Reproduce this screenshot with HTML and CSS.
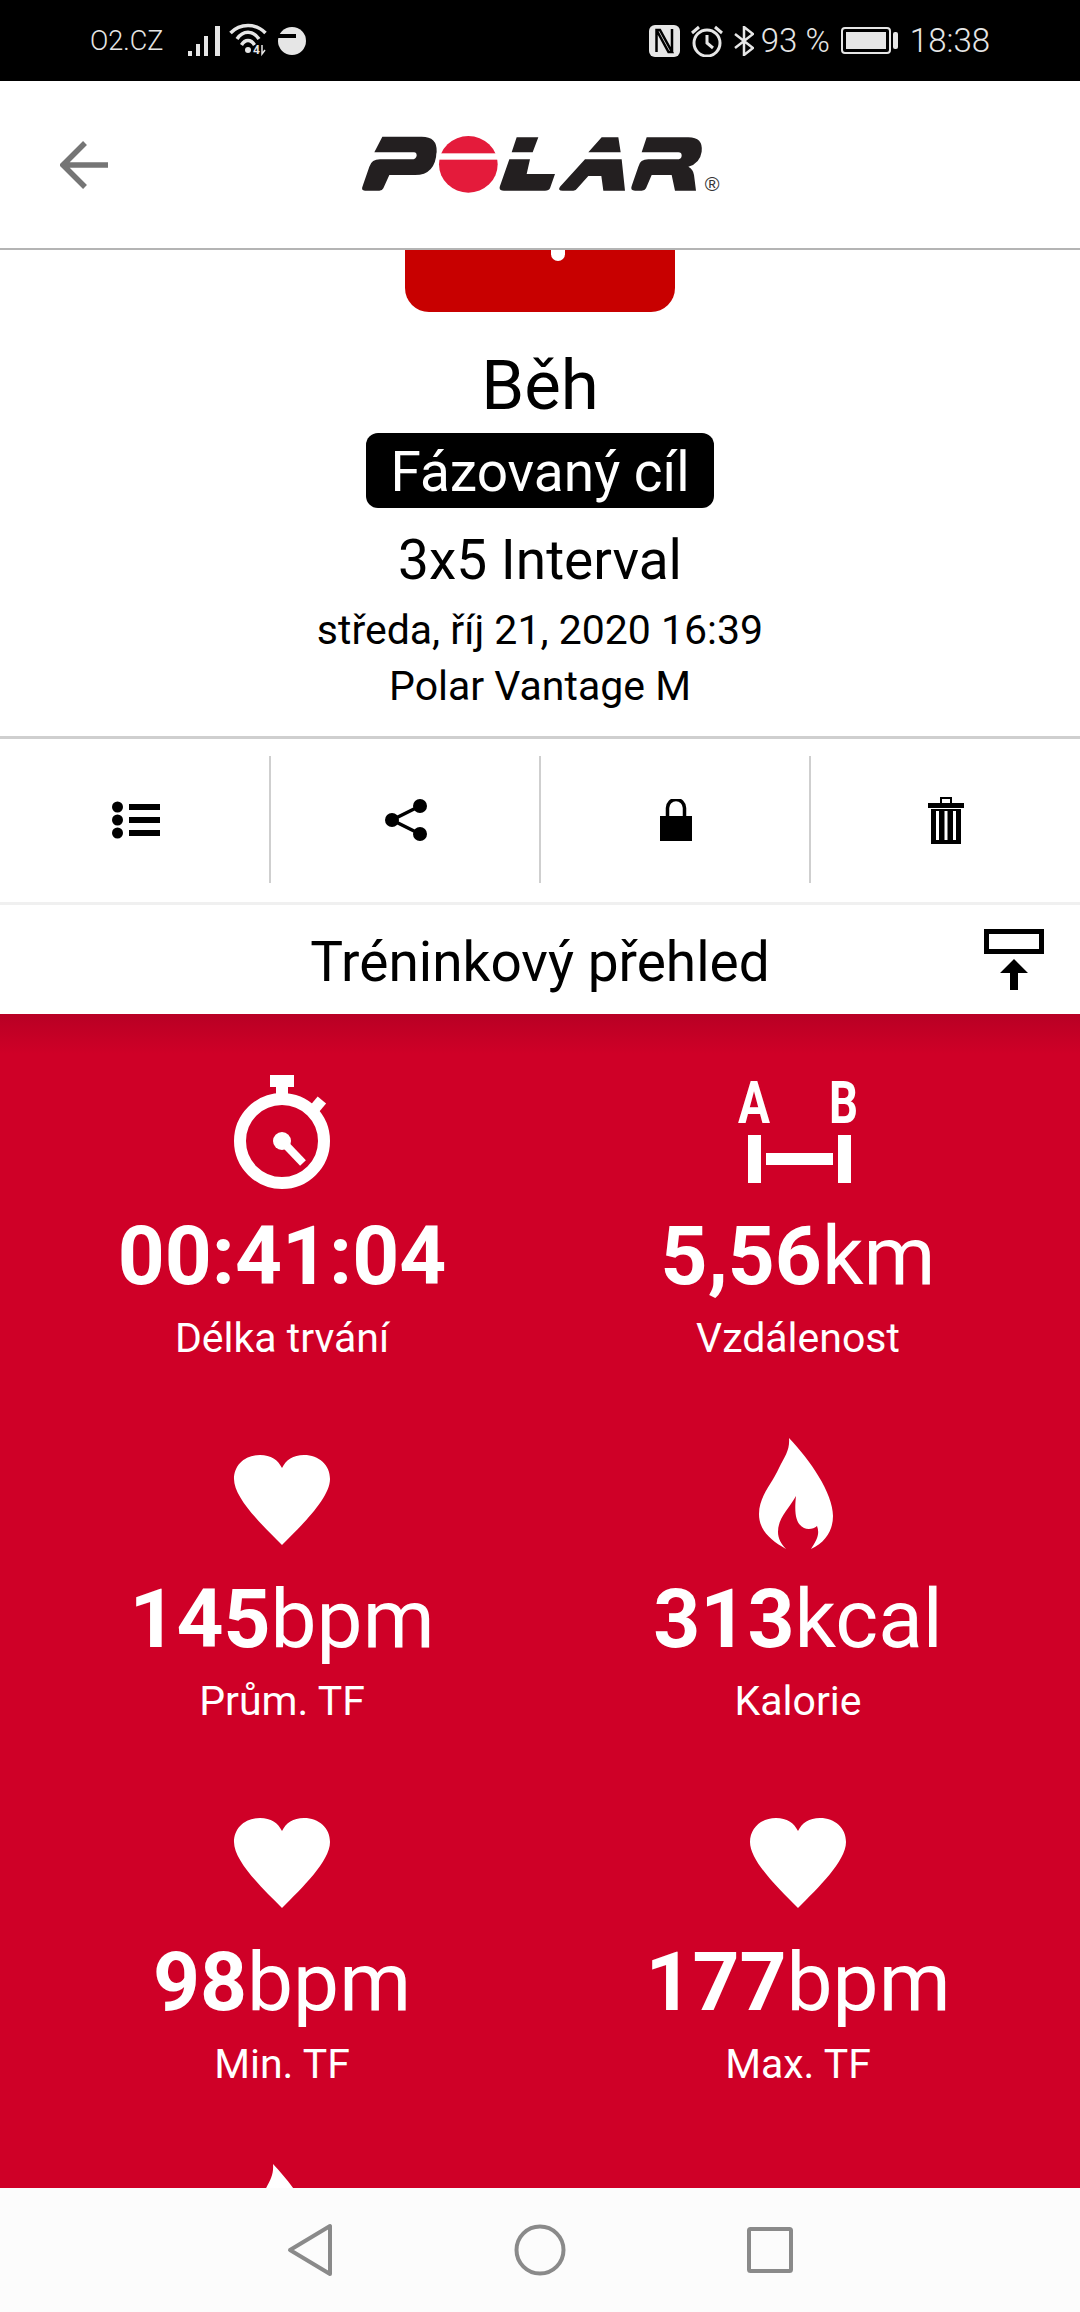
FILE: index.html
```html
<!DOCTYPE html>
<html lang="cs">
<head>
  <meta charset="UTF-8">
  <meta name="viewport" content="width=device-width, initial-scale=1.0">
  <title>Polar Flow</title>
  <link rel="stylesheet" href="styles.css">
</head>
<body>
  <div class="screen">
    <!-- phone status bar -->
    <div class="status-bar">
      <div class="status-left">
        <span class="carrier">O2.CZ</span>
        <svg class="ic-signal" width="33" height="30" viewBox="0 0 33 30"><path d="M0 25h4v5H0zM8 18h4v12H8zM16 10h4v20h-4zM27 0h5v30h-5z" fill="#e6e6e6"/></svg>
        <svg class="ic-wifi" width="38" height="38" viewBox="0 -4 38 38" fill="none" stroke="#e6e6e6" stroke-width="3.500"><path d="M1.500 9C11 -1 27 -1 36.500 9M8 15C14 6 24 6 30 15M12.500 21C16 15 22 15 25.500 21"/><circle cx="19" cy="26" r="3" fill="#e6e6e6" stroke="none"/><text class="wifi-four" x="24" y="30">4</text><path d="M33 21v9l3-4" stroke-width="1.500"/></svg>
        <svg class="ic-data" width="28" height="28" viewBox="0 0 28 28"><circle cx="14" cy="14" r="14" fill="#e6e6e6"/><rect x="0" y="7" width="18" height="4" fill="#000"/></svg>
      </div>
      <div class="status-right">
        <svg width="31" height="32" viewBox="0 0 31 32"><rect width="31" height="32" rx="6" fill="#e6e6e6"/><path d="M7.500 27V5H11L23 27H19.500L7.500 5M23 27V4" fill="none" stroke="#000" stroke-width="2.500"/></svg>
        <svg class="ic-alarm" width="32" height="32" viewBox="0 0 32 32" fill="none" stroke="#e6e6e6" stroke-width="3"><circle cx="16" cy="18" r="13"/><path d="M16 10v8l6 5M1 8l7-6M31 8l-7-6"/></svg>
        <svg class="ic-bt" width="20" height="30" viewBox="0 0 20 30" fill="none" stroke="#e6e6e6" stroke-width="2.500"><path d="M1 8l18 14-9 7V1l9 7-18 14"/></svg>
        <span class="battery-pct">93 %</span>
        <div class="battery"><div class="battery-fill"></div></div>
        <div class="battery-nub"></div>
        <span class="clock">18:38</span>
      </div>
    </div>

    <!-- app header -->
    <header class="app-header">
      <svg class="back" width="50" height="48" viewBox="0 0 50 48" fill="none" stroke="#757575" stroke-width="5.500"><path d="M48 24H3M25 2L3 24l22 22"/></svg>
      <svg class="logo" width="400" height="100" viewBox="0 0 1200 300">
        <g fill="#231f20">
          <path d="M127 50H245Q292 50 290 95Q286 165 225 165H148L130 205Q127 212 118 212H75Q62 212 68 198L88 140Q95 118 120 118H215Q228 118 230 107Q230 97 222 97H103Z"/>
          <path d="M530 52H595L578 97H515ZM508 118H570L560 162H645L630 205Q627 212 615 212H492Q475 212 480 198Z"/>
          <path d="M785 52H835L842 97H745ZM735 118H845L855 212H790L784 168H745L712 205Q708 212 700 212H668Q652 212 660 200Z"/>
          <path d="M920 52H1045Q1090 52 1085 95Q1080 130 1045 140Q1060 148 1062 165L1068 212H1005L995 165H935L918 205Q915 212 905 212H885Q870 212 875 198L895 140Q900 118 925 118H1010Q1025 118 1025 107Q1025 97 1015 97H905Z"/>
        </g>
        <ellipse cx="385" cy="133" rx="88" ry="85" fill="#e41b3b"/>
        <rect x="290" y="100" width="190" height="19" fill="#fff"/>
        <text class="logo-reg" x="1116" y="212" text-anchor="middle">®</text>
      </svg>
    </header>

    <main class="content">
      <div class="sport-tile"><span class="sport-tile-mark"></span></div>

      <section class="summary">
        <h1 class="sport-name">Běh</h1>
        <span class="target-chip">Fázovaný cíl</span>
        <p class="target-name">3x5 Interval</p>
        <p class="meta">středa, říj 21, 2020 16:39</p>
        <p class="meta">Polar Vantage M</p>
      </section>

      <div class="actions">
        <div class="action">
          <svg width="48" height="38" viewBox="0 0 48 38"><g fill="#000"><circle cx="5.500" cy="6" r="5.500"/><circle cx="5.500" cy="19" r="5.500"/><circle cx="5.500" cy="32" r="5.500"/><rect x="17" y="3" width="31" height="6"/><rect x="17" y="16" width="31" height="6"/><rect x="17" y="29" width="31" height="6"/></g></svg>
        </div>
        <div class="action">
          <svg width="42" height="42" viewBox="0 0 42 42"><path d="M35 7L7 21l28 14" fill="none" stroke="#000" stroke-width="3.500"/><circle cx="35" cy="7" r="7"/><circle cx="7" cy="21" r="7"/><circle cx="35" cy="35" r="7"/></svg>
        </div>
        <div class="action">
          <svg width="32" height="42" viewBox="0 0 32 42"><rect y="17" width="32" height="25"/><path d="M7.500 18V9a8.500 8.500 0 0 1 17 0v9" fill="none" stroke="#000" stroke-width="3.500"/></svg>
        </div>
        <div class="action">
          <svg width="36" height="48" viewBox="0 0 36 48"><path d="M0 7h12V1h12v6h12v5H0z"/><path d="M14 3h8v4h-8z" fill="#fff"/><path d="M3 13h30v35H3z"/><path d="M8 15h3v29H8zM16.500 15h3v29h-3zM25 15h3v29h-3z" fill="#fff"/></svg>
        </div>
      </div>

      <div class="overview-head">
        <span></span>
        <h2 class="overview-title">Tréninkový přehled</h2>
        <svg class="collapse" width="60" height="61" viewBox="0 0 60 61"><rect x="2.500" y="2.500" width="55" height="20" fill="none" stroke="#000" stroke-width="5"/><path d="M30 30l14 14h-10v17h-8V44H16z"/></svg>
      </div>

      <div class="stats">
        <div class="stat">
          <svg class="stat-icon" viewBox="0 0 120 115"><g fill="#fff"><rect x="48" y="0" width="24" height="12"/><rect x="54" y="10" width="12" height="12"/><rect x="90" y="23" width="11" height="15" transform="rotate(40 95 30)"/></g><circle cx="60" cy="66" r="42" fill="none" stroke="#fff" stroke-width="12"/><circle cx="60" cy="66" r="9" fill="#fff"/><path d="M60 66l21 22" stroke="#fff" stroke-width="8"/></svg>
          <div class="stat-value"><b>00:41:04</b></div>
          <div class="stat-label">Délka trvání</div>
        </div>
        <div class="stat">
          <svg class="stat-icon distance-icon" viewBox="-20 -14 160 129"><text class="ab" x="0" y="48" textLength="32" lengthAdjust="spacingAndGlyphs">A</text><text class="ab" x="91" y="48" textLength="29" lengthAdjust="spacingAndGlyphs">B</text><path d="M10 60h13v48H10zM100 60h13v48h-13zM28 78h67v12H28z" fill="#fff"/></svg>
          <div class="stat-value"><b>5,56</b>km</div>
          <div class="stat-label">Vzdálenost</div>
        </div>
        <div class="stat">
          <svg class="stat-icon" viewBox="0 0 120 115"><path class="heart" d="M60 107C40 87 12 60 12 41C12 27 23 17 38 17C49 17 56 22 60 30C64 22 71 17 82 17C97 17 108 27 108 41C108 60 80 87 60 107Z"/></svg>
          <div class="stat-value"><b>145</b>bpm</div>
          <div class="stat-label">Prům. TF</div>
        </div>
        <div class="stat">
          <svg class="stat-icon" viewBox="0 0 120 115"><path class="heart" d="M51 0C72 22 95 55 95 78C95 92 88 104 73 111C79 102 82 96 79 88C76 91 70 92 66 90C58 86 56 76 58 58C50 72 40 80 40 94C40 100 43 106 48 111C32 102 21 92 21 76C21 58 34 46 41 30C47 18 52 12 51 0Z"/></svg>
          <div class="stat-value"><b>313</b>kcal</div>
          <div class="stat-label">Kalorie</div>
        </div>
        <div class="stat">
          <svg class="stat-icon" viewBox="0 0 120 115"><path class="heart" d="M60 107C40 87 12 60 12 41C12 27 23 17 38 17C49 17 56 22 60 30C64 22 71 17 82 17C97 17 108 27 108 41C108 60 80 87 60 107Z"/></svg>
          <div class="stat-value"><b>98</b>bpm</div>
          <div class="stat-label">Min. TF</div>
        </div>
        <div class="stat">
          <svg class="stat-icon" viewBox="0 0 120 115"><path class="heart" d="M60 107C40 87 12 60 12 41C12 27 23 17 38 17C49 17 56 22 60 30C64 22 71 17 82 17C97 17 108 27 108 41C108 60 80 87 60 107Z"/></svg>
          <div class="stat-value"><b>177</b>bpm</div>
          <div class="stat-label">Max. TF</div>
        </div>
        <div class="stat">
          <svg class="stat-icon" viewBox="0 0 120 115"><path class="heart" d="M51 0C72 22 95 55 95 78C95 92 88 104 73 111C79 102 82 96 79 88C76 91 70 92 66 90C58 86 56 76 58 58C50 72 40 80 40 94C40 100 43 106 48 111C32 102 21 92 21 76C21 58 34 46 41 30C47 18 52 12 51 0Z"/></svg>
        </div>
      </div>
    </main>

    <!-- android navigation keys -->
    <nav class="nav-bar">
      <div class="nav-key"><svg width="46" height="54" viewBox="0 0 46 54" fill="none" stroke="#8a8a8a" stroke-width="4" stroke-linejoin="round"><path d="M43 3v48L3 27z"/></svg></div>
      <div class="nav-key"><svg width="52" height="52" viewBox="0 0 52 52" fill="none" stroke="#8a8a8a" stroke-width="4"><circle cx="26" cy="26" r="23.500"/></svg></div>
      <div class="nav-key"><svg width="46" height="46" viewBox="0 0 46 46" fill="none" stroke="#8a8a8a" stroke-width="4" stroke-linejoin="round"><rect x="2" y="2" width="42" height="42" rx="1.500"/></svg></div>
    </nav>
  </div>
</body>
</html>
```

FILE: styles.css
```css
* {
  box-sizing: border-box;
}
html, body {
  margin: 0;
  padding: 0;
}
body {
  font-family: Roboto, "Noto Sans", sans-serif;
  background: #fff;
  color: #000;
}
.screen {
  width: 1080px;
  height: 2312px;
  display: flex;
  flex-direction: column;
  overflow: hidden;
}

/* status bar */
.status-bar {
  height: 81px;
  flex: none;
  background: #000;
  color: #e6e6e6;
  display: flex;
  align-items: center;
  justify-content: space-between;
  padding: 0 90px 0 90px;
  font-weight: 300;
}
.status-left, .status-right {
  display: flex;
  align-items: center;
}
.carrier {
  font-size: 27px;
  width: 98px;
}
.wifi-four {
  font-size: 12px;
  font-weight: 700;
  fill: #e6e6e6;
  stroke: none;
}
.ic-wifi {
  margin-left: 8px;
  margin-bottom: 4px;
}
.ic-data {
  margin-left: 11px;
}
.ic-alarm {
  margin-left: 11px;
}
.ic-bt {
  margin-left: 11px;
}
.battery-pct {
  font-size: 33px;
  margin-left: 7px;
}
.battery {
  width: 50px;
  height: 27px;
  margin-left: 11px;
  border: 2px solid #e6e6e6;
  border-radius: 4px;
  padding: 3px;
}
.battery-fill {
  height: 100%;
  background: #e6e6e6;
}
.battery-nub {
  width: 5px;
  height: 17px;
  margin-left: 2px;
  background: #e6e6e6;
  border-radius: 2px;
}
.clock {
  font-size: 33px;
  margin-left: 12px;
}

/* app header */
.app-header {
  height: 169px;
  flex: none;
  display: flex;
  align-items: center;
  justify-content: center;
  border-bottom: 2px solid #b4b4b4;
  position: relative;
}
.back {
  position: absolute;
  left: 60px;
  top: 60px;
}
.logo {
  margin-top: 10px;
}
.logo-reg {
  font-family: "Liberation Sans", sans-serif;
  font-size: 60px;
  fill: #333;
}

.content {
  flex: 1;
  min-height: 0;
  display: flex;
  flex-direction: column;
  overflow: hidden;
}

/* sport icon, scrolled mostly under the header */
.sport-tile {
  width: 270px;
  height: 62px;
  flex: none;
  margin: 0 auto;
  background: #c80000;
  border-radius: 0 0 24px 24px;
  display: flex;
  justify-content: center;
}
.sport-tile-mark {
  width: 14px;
  height: 11px;
  margin-left: 36px;
  background: #fff;
  border-radius: 0 0 7px 7px;
}

/* activity summary */
.summary {
  height: 427px;
  flex: none;
  display: flex;
  flex-direction: column;
  align-items: center;
  border-bottom: 3px solid #cfcfcf;
}
.sport-name {
  margin: 36px 0 0;
  font-size: 69px;
  font-weight: 400;
  line-height: 76px;
}
.target-chip {
  margin-top: 9px;
  height: 75px;
  width: 348px;
  background: #000;
  color: #fff;
  border-radius: 12px;
  font-size: 55px;
  line-height: 78px;
  text-align: center;
}
.target-name {
  margin: 22px 0 0;
  font-size: 55px;
  line-height: 60px;
}
.meta {
  margin: 0;
  font-size: 41px;
  line-height: 56px;
}
.target-name + .meta {
  margin-top: 12px;
}

/* action buttons */
.actions {
  height: 166px;
  flex: none;
  display: grid;
  grid-template-columns: repeat(4, 270px);
  padding: 17px 0 19px;
  border-bottom: 3px solid #f0f0f0;
}
.action {
  display: flex;
  align-items: center;
  justify-content: center;
  padding-left: 2px;
  border-right: 2px solid #cfcfcf;
  margin-right: -1px;
}
.action:last-child {
  border-right: none;
  padding-left: 0;
}

/* training overview */
.overview-head {
  height: 109px;
  flex: none;
  display: grid;
  grid-template-columns: 1fr auto 1fr;
  align-items: center;
  padding-right: 36px;
  padding-left: 36px;
}
.overview-title {
  margin: 5px 0 0;
  font-size: 55px;
  font-weight: 400;
}
.collapse {
  justify-self: end;
}
.stats {
  flex: 1;
  min-height: 0;
  overflow: hidden;
  display: grid;
  grid-template-columns: 516px 516px;
  justify-content: center;
  grid-auto-rows: 285px;
  row-gap: 78px;
  padding-top: 61px;
  background: linear-gradient(#b80024, #cf0027 40px);
  color: #fff;
}
.stat {
  display: flex;
  flex-direction: column;
  align-items: center;
  text-align: center;
}
.stat-icon {
  width: 120px;
  height: 115px;
  flex: none;
}
/* wider and taller box so the A and B labels fit round the bar */
.distance-icon {
  width: 160px;
  height: 129px;
  margin-top: -14px;
}
.heart {
  fill: #fff;
}
.ab {
  font-size: 59px;
  font-weight: 700;
  fill: #fff;
}
.stat-value {
  margin-top: 18px;
  font-size: 82px;
  line-height: 96px;
  white-space: nowrap;
}
.stat-value b {
  font-weight: 700;
}
.stat-label {
  margin-top: 12px;
  font-size: 41px;
  line-height: 44px;
}

/* navigation keys */
.nav-bar {
  height: 124px;
  flex: none;
  background: #fcfcfc;
  display: flex;
  justify-content: center;
  align-items: center;
}
.nav-key {
  width: 230px;
  display: flex;
  justify-content: center;
}
```
